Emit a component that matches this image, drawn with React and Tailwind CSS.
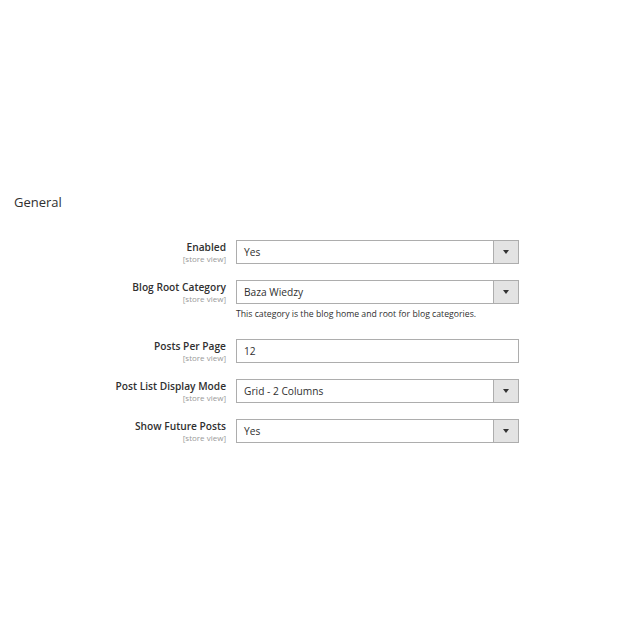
import React from "react";

const font = { fontFamily: "'Open Sans', 'Noto Sans', sans-serif" };

function Arrow() {
  return (
    <div className="w-[25px] flex items-center justify-center bg-[#e3e3e3] border-l border-[#adadad]">
      <svg width="6" height="4" viewBox="0 0 6 4">
        <path d="M0 0h6L3 4z" fill="#333" />
      </svg>
    </div>
  );
}

function Row({ label, children, note }) {
  return (
    <div className="flex items-start">
      <div className="w-[226px] pt-[1px] text-right leading-none">
        <div className="text-[10.2px] font-semibold text-[#303030] leading-[12px]">{label}</div>
        <div className="mt-[1px] text-[8px] text-[#999] leading-[10px]">[store view]</div>
      </div>
      <div className="ml-[10px] w-[283px]">
        {children}
        {note && (
          <div className="text-[8.7px] text-[#303030] mt-[4px] mb-[3px] leading-[12px]">{note}</div>
        )}
      </div>
    </div>
  );
}

function Select({ value }) {
  return (
    <div className="flex h-[24px] border border-[#adadad] bg-white">
      <div className="flex-1 flex items-center pl-[7px] pt-[1px] text-[10.2px] text-[#303030]">{value}</div>
      <Arrow />
    </div>
  );
}

function Input({ value }) {
  return (
    <div className="flex h-[24px] border border-[#adadad] bg-white items-center pl-[7px] pt-[1px] text-[10.2px] text-[#303030]">
      {value}
    </div>
  );
}

export default function App() {
  return (
    <div className="w-[640px] h-[640px] bg-white" style={font}>
      <div className="pt-[193px] pl-[14px] text-[13px] text-[#303030] leading-[18px]">General</div>
      <div className="mt-[29px] flex flex-col gap-[16px]">
        <Row label="Enabled">
          <Select value="Yes" />
        </Row>
        <Row label="Blog Root Category" note="This category is the blog home and root for blog categories.">
          <Select value="Baza Wiedzy" />
        </Row>
        <Row label="Posts Per Page">
          <Input value="12" />
        </Row>
        <Row label="Post List Display Mode">
          <Select value="Grid - 2 Columns" />
        </Row>
        <Row label="Show Future Posts">
          <Select value="Yes" />
        </Row>
      </div>
    </div>
  );
}
